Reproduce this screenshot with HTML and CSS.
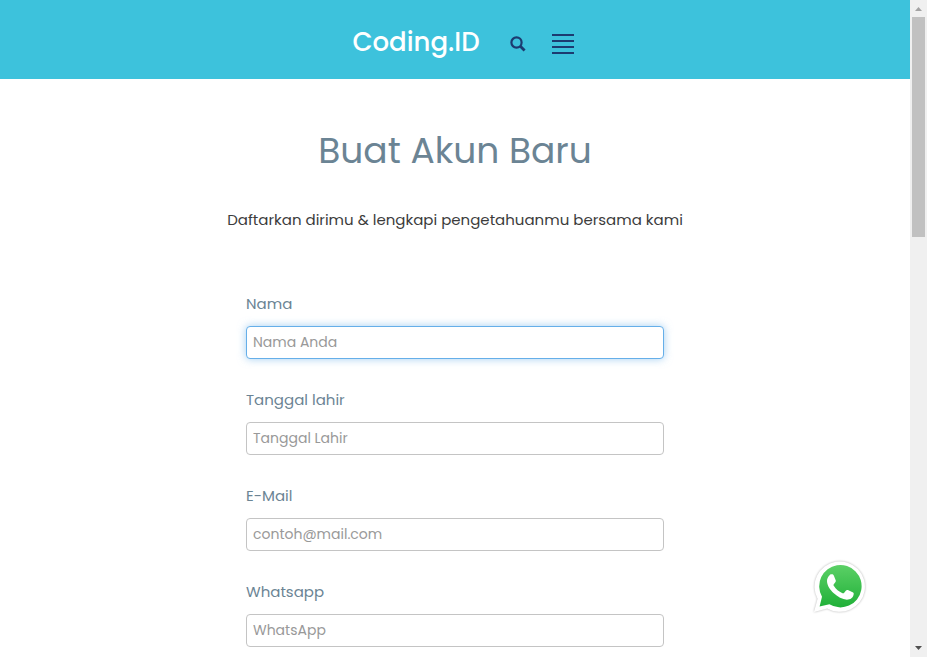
FILE: index.html
```html
<!DOCTYPE html>
<html lang="id">
<head>
<meta charset="utf-8">
<meta name="viewport" content="width=device-width, initial-scale=1">
<title>Buat Akun Baru - Coding.ID</title>
<link rel="stylesheet" href="styles.css">
</head>
<body>
<div class="window">
  <div class="page">
    <header class="topbar">
      <a class="logo" href="#">Coding.ID</a>
      <button class="icon-button search" type="button" aria-label="Cari">
        <svg width="16" height="16" viewBox="0 0 16 16" fill="none" stroke="currentColor">
          <circle cx="6.5" cy="6.5" r="5.1" stroke-width="2.2"/>
          <path d="M10.3 10.3 14.6 14.6" stroke-width="2.8"/>
        </svg>
      </button>
      <button class="icon-button menu" type="button" aria-label="Menu">
        <svg width="22" height="20" viewBox="0 0 22 20" fill="currentColor">
          <path d="M0 0h22v2H0zM0 6h22v2H0zM0 12h22v2H0zM0 18h22v2H0z"/>
        </svg>
      </button>
    </header>
    <main class="content">
      <h1 class="title">Buat Akun Baru</h1>
      <p class="subtitle">Daftarkan dirimu &amp; lengkapi pengetahuanmu bersama kami</p>
      <form class="form">
        <div class="field">
          <label for="nama">Nama</label>
          <input class="active" id="nama" type="text" placeholder="Nama Anda">
        </div>
        <div class="field">
          <label for="lahir">Tanggal lahir</label>
          <input id="lahir" type="text" placeholder="Tanggal Lahir">
        </div>
        <div class="field">
          <label for="email">E-Mail</label>
          <input id="email" type="email" placeholder="contoh@mail.com">
        </div>
        <div class="field">
          <label for="whatsapp">Whatsapp</label>
          <input id="whatsapp" type="tel" placeholder="WhatsApp">
        </div>
      </form>
    </main>
    <a class="chat" href="#" aria-label="WhatsApp">
      <svg width="56" height="56" viewBox="0 0 56 56">
        <defs>
          <linearGradient id="green" x1="0" y1="0" x2="0" y2="1">
            <stop offset="0" stop-color="#5bd066"/>
            <stop offset="1" stop-color="#20b038"/>
          </linearGradient>
        </defs>
        <path class="bubble" d="M3 53 6.6 39.7A25.2 25.2 0 1 1 16.2 49.5Z"/>
        <path fill="url(#green)" d="M8.6 47.6 11 37.7A21.2 21.2 0 1 1 18.4 45.3Z"/>
        <path fill="#fff" d="M18.2 16.700c.7-1.2 1.700-1.500 2.700-1.400 1 0 1.400.2 1.900 1.300l1.900 4.700c.3.8.1 1.300-.4 2l-1.500 1.900c-.5.600-.4 1 0 1.600 2.200 3.600 5 5.900 8.700 7.400.7.300 1.200.2 1.700-.4l1.800-2.200c.6-.8 1.100-.8 1.900-.5l4.700 2.200c.9.5 1.200.7 1.100 1.700-.3 3.900-3.500 5.700-6.800 5.700-4.400-.2-9.400-2.800-13.400-6.600-3.500-3.500-6.400-7.600-6.500-12.100 0-2 .8-4 2.200-5.300Z"/>
      </svg>
    </a>
  </div>
  <div class="scrollbar" aria-hidden="true">
    <svg class="arrow up" width="17" height="17" viewBox="0 0 17 17"><path d="M5 11h7L8.500 7Z"/></svg>
    <div class="thumb"></div>
    <svg class="arrow down" width="17" height="17" viewBox="0 0 17 17"><path d="M5 6h7L8.500 10Z"/></svg>
  </div>
</div>
</body>
</html>
```
FILE: styles.css
```css
* {
  box-sizing: border-box;
}

body {
  margin: 0;
  background: #fff;
  color: #3c3c3c;
  font-family: Poppins, Inter, "Open Sans", sans-serif;
  font-size: 15px;
  line-height: 24px;
}

.window {
  display: grid;
  grid-template-columns: minmax(0, 1fr) 17px;
  height: 100vh;
}

.page {
  overflow: hidden;
}

.topbar {
  display: flex;
  align-items: center;
  justify-content: center;
  height: 79px;
  padding: 8px 0 0 16px;
  background: #3dc2dc;
}

.logo {
  padding-bottom: 4px;
  color: #fff;
  font-family: Poppins, Lato, sans-serif;
  font-size: 26px;
  font-weight: 500;
  line-height: 40px;
  text-decoration: none;
}

.icon-button {
  display: flex;
  padding: 0;
  border: 0;
  background: none;
  color: #1c3b70;
}

.search {
  margin-left: 30px;
}

.menu {
  margin-left: 26px;
}

.content {
  padding: 44px 16px 0;
}

.title {
  margin: 0 0 29px;
  color: #6b8494;
  font-size: 36px;
  font-weight: 400;
  line-height: 56px;
  text-align: center;
}

.subtitle {
  margin: 0 0 60px;
  text-align: center;
}

.form {
  display: grid;
  gap: 29px;
  max-width: 418px;
  margin: 0 auto;
}

.field {
  display: grid;
  gap: 10px;
}

.field label {
  color: #6b8494;
  line-height: 24px;
}

.field input {
  width: 100%;
  height: 33px;
  padding: 0 6px;
  border: 1px solid #c4c4c4;
  border-radius: 4px;
  background: #fff;
  color: #3c3c3c;
  font: inherit;
  font-size: 14px;
}

.field input::placeholder {
  color: #999;
  opacity: 1;
}

.field input.active,
.field input:focus {
  border-color: #66afe9;
  outline: 0;
  box-shadow: 0 0 8px rgba(102, 175, 233, 0.6);
}

.chat {
  position: fixed;
  right: 60px;
  bottom: 42px;
  display: flex;
}

.bubble {
  fill: #fff;
  filter: drop-shadow(0 0 1px rgba(0, 0, 0, 0.3));
}

.scrollbar {
  display: flex;
  flex-direction: column;
  background: #f0f0f0;
}

.thumb {
  height: 34%;
  max-height: 220px;
  margin: 0 2px;
  background: #c1c1c1;
}

.arrow {
  flex: none;
}

.up {
  fill: #a3a3a3;
}

.down {
  margin-top: auto;
  fill: #505050;
}
```
